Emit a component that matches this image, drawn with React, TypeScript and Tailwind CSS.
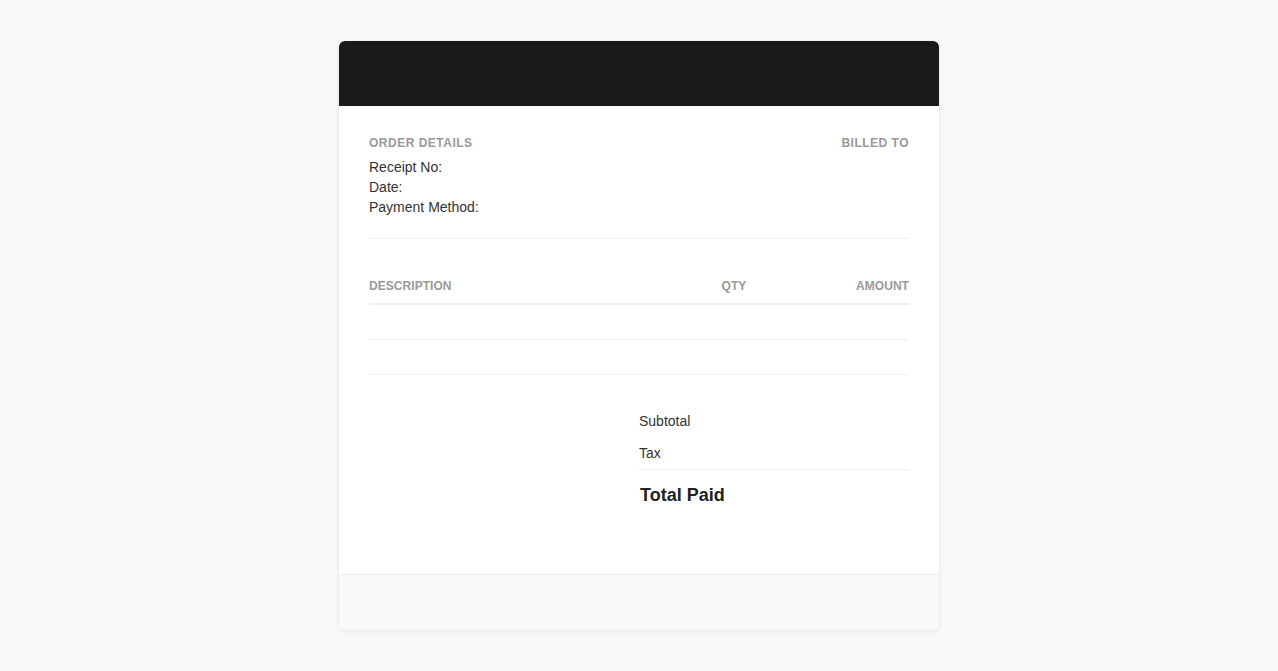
import React from "react";

export default function App() {
  const label =
    "text-[12px] leading-[14px] font-bold uppercase tracking-[0.5px] text-[#999999]";
  const th =
    "text-[12px] leading-[14px] font-bold uppercase tracking-[0.05px] text-[#999999]";
  return (
    <div
      className="min-h-[671px] w-full bg-[#f8f8f8] pt-[41px] pb-[41px]"
      style={{ fontFamily: '"Liberation Sans", Arial, sans-serif' }}
    >
      <div className="mx-auto w-[600px] overflow-hidden rounded-[6px] bg-white shadow-[0_1px_4px_rgba(0,0,0,0.08)]">
        <div className="h-[65px] bg-[#1a1a1a]" />
        <div className="px-[30px] pt-[30px] pb-[67px]">
          <div className="flex justify-between border-b border-[#eeeeee] pb-[21px]">
            <div>
              <div className={`${label} mb-[7px]`}>Order Details</div>
              <div className="text-[14px] leading-[20px] text-[#333333]">Receipt No:</div>
              <div className="text-[14px] leading-[20px] text-[#333333]">Date:</div>
              <div className="text-[14px] leading-[20px] text-[#333333]">Payment Method:</div>
            </div>
            <div className="text-right">
              <div className={label}>Billed To</div>
            </div>
          </div>

          <div className="mt-[30px]">
            <div className="flex h-[36px] items-center border-b-2 border-[#eeeeee] pb-[1px]">
              <div className={`${th} flex-1`}>Description</div>
              <div className={`${th} w-[80px] text-center`}>Qty</div>
              <div className={`${th} w-[135px] text-right`}>Amount</div>
            </div>
            <div className="h-[35px] border-b border-[#f0f0f0]" />
            <div className="h-[35px] border-b border-[#f0f0f0]" />
          </div>

          <div className="ml-auto mt-[30px] w-[270px]">
            <div className="flex justify-between py-[6px] text-[14px] leading-[20px] text-[#333333]">
              <span>Subtotal</span>
              <span></span>
            </div>
            <div className="flex justify-between py-[6px] text-[14px] leading-[20px] text-[#333333]">
              <span>Tax</span>
              <span></span>
            </div>
            <div className="flex justify-between border-t border-[#eeeeee] pt-[13px] text-[18px] leading-[24px] font-bold text-[#222222]">
              <span className="pl-[1px]">Total Paid</span>
              <span></span>
            </div>
          </div>
        </div>
        <div className="h-[56px] border-t border-[#eeeeee] bg-[#f9f9f9]" />
      </div>
    </div>
  );
}
